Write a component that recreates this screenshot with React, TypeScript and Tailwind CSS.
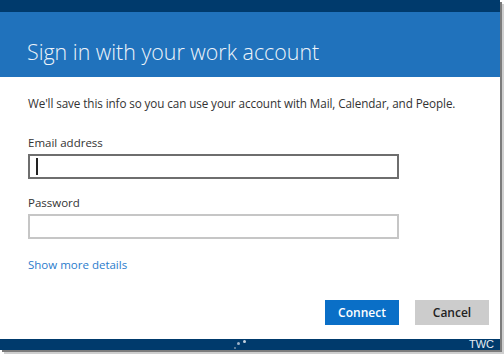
export default function App() {
  return (
    <div className="h-[354px] w-[504px] overflow-hidden bg-white font-['Open_Sans',sans-serif]">
      <div className="flex h-[350px] w-[500px] flex-col bg-white shadow-[2px_2px_0_#7c7c7c,4px_4px_0_#cfcfcf]">
        <div className="h-[12px] bg-[#003a6c]" />

        <div className="flex h-[65px] items-center bg-[#2072bc] pl-[27px] pt-[15px]">
          <h1 className="text-[21.4px] font-light text-[#eef4fa]">
            Sign in with your work account
          </h1>
        </div>

        <div className="flex flex-1 flex-col px-[28px] pt-[18px] text-[#333]">
          <p className="text-[11.7px] tracking-[-0.1px]">
            We&apos;ll save this info so you can use your account with Mail,
            Calendar, and People.
          </p>

          <label className="mt-[21px] text-[11.5px] text-[#333]">Email address</label>
          <div className="mt-[3px] flex h-[25px] w-[371px] items-center border-2 border-[#6e6e6e] bg-white pl-[6px]">
            <span className="h-[17px] w-[1.5px] bg-[#222]" />
          </div>

          <label className="mt-[15px] text-[11.5px] text-[#333]">Password</label>
          <div className="mt-[3px] h-[25px] w-[371px] border-2 border-[#c6c6c6] bg-white" />

          <a className="mt-[17px] text-[11.5px] text-[#2b7ccc]">Show more details</a>

          <div className="-mr-[17px] mt-[27px] flex justify-end gap-[16px]">
            <button className="h-[25px] w-[74px] bg-[#0a6fc7] text-[12px] font-semibold text-white">
              Connect
            </button>
            <button className="h-[25px] w-[74px] bg-[#cccccc] text-[12px] font-semibold text-[#222]">
              Cancel
            </button>
          </div>
        </div>

        <div className="relative flex h-[11px] items-center justify-end bg-[#003a6c] pr-[6px]">
          <span className="absolute left-[237px] top-[3px] h-[3px] w-[3px] rounded-full bg-[#9fb3c8]" />
          <span className="absolute left-[243px] top-[1px] h-[3px] w-[3px] rounded-full bg-[#c5d2df]" />
          <span className="absolute left-[234px] top-[8px] h-[2px] w-[2px] rounded-full bg-[#7890a8]" />
          <span className="font-['Liberation_Sans',sans-serif] text-[11px] leading-none text-[#e6edf4]">
            TWC
          </span>
        </div>
      </div>
    </div>
  );
}
